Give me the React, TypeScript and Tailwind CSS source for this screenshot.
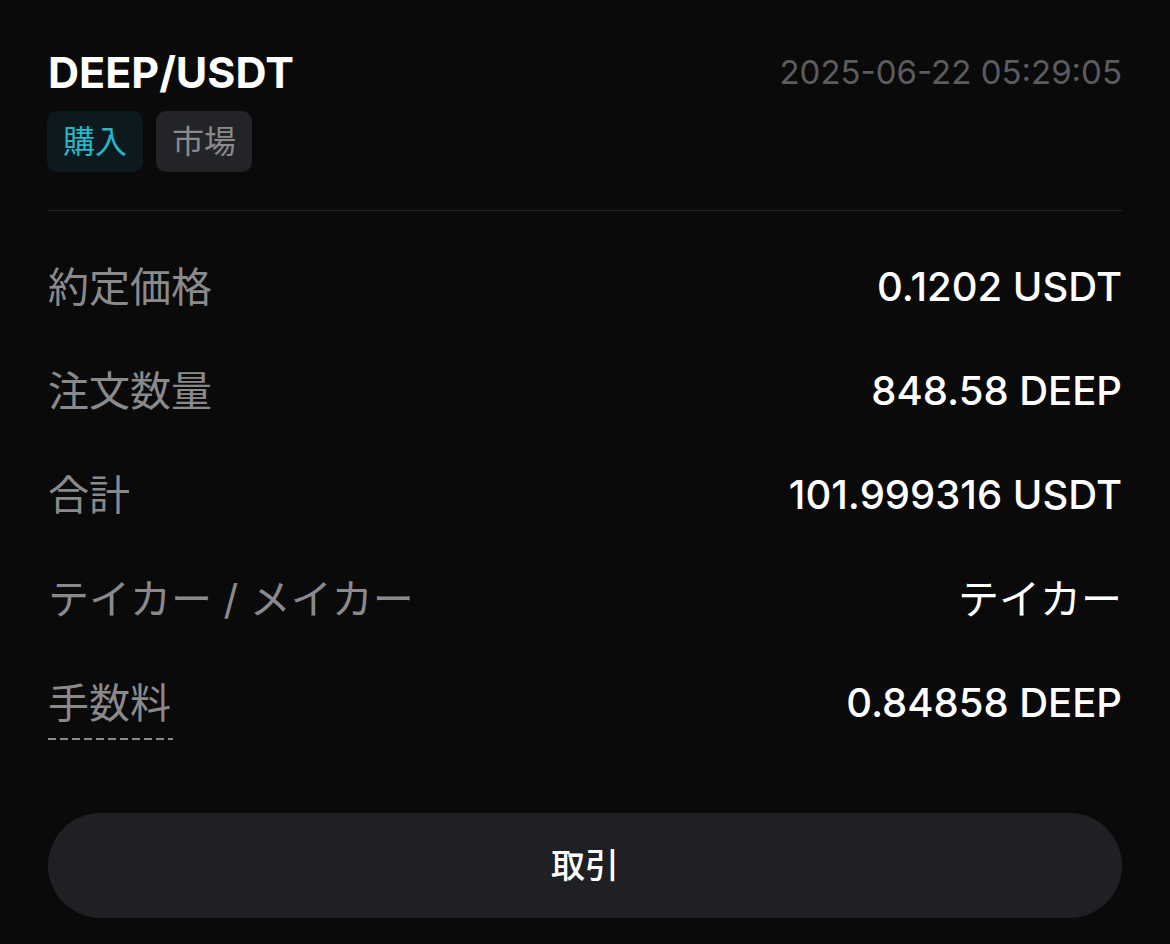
import React from "react";

const ROWS = [
  { label: "約定価格", value: "0.1202 USDT" },
  { label: "注文数量", value: "848.58 DEEP" },
  { label: "合計", value: "101.999316 USDT" },
  { label: "テイカー / メイカー", value: "テイカー", cjk: true },
  { label: "手数料", value: "0.84858 DEEP", dotted: true },
];

const FONT = "font-['Inter','Noto_Sans_CJK_JP',sans-serif]";

export default function App() {
  return (
    <div className={`min-h-[944px] w-full bg-[#0a0a0b] px-12 pt-[46px] ${FONT}`}>
      {/* header */}
      <div className="flex items-start justify-between">
        <div className="flex flex-col">
          <h1 className="text-[43px] font-bold leading-[52px] text-white">DEEP/USDT</h1>
          <div className="-ml-px mt-[13px] flex gap-[13px]">
            <span className="flex h-[61px] items-center rounded-[10px] bg-[#0c1a1d] px-4 text-[32px] text-[#27b5c7]">
              購入
            </span>
            <span className="flex h-[61px] items-center rounded-[10px] bg-[#232427] px-4 text-[32px] text-[#8a8a8d]">
              市場
            </span>
          </div>
        </div>
        <span className="mt-[6px] text-[33px] leading-[40px] text-[#5b5b60]">2025-06-22 05:29:05</span>
      </div>

      <div className="mt-[38px] h-px bg-[#232325]" />

      {/* rows */}
      <div className="mt-6 flex flex-col">
        {ROWS.map((r) => (
          <div key={r.label} className="flex h-[104px] items-center justify-between">
            {r.dotted ? (
              <span className="relative text-[41px] leading-[48px] text-[#8a8a8d]">
                {r.label}
                <span className="absolute -bottom-[13px] left-0 h-[2px] w-[calc(100%+2px)] bg-[repeating-linear-gradient(90deg,#8a8a8d_0_8px,transparent_8px_12px)]" />
              </span>
            ) : (
              <span className="text-[41px] leading-[48px] text-[#8a8a8d]">{r.label}</span>
            )}
            <span
              className={
                r.cjk
                  ? "text-[41px] font-normal leading-[48px] text-white"
                  : "text-[40px] font-medium leading-[48px] text-white"
              }
            >
              {r.value}
            </span>
          </div>
        ))}
      </div>

      <button className="mt-[58px] flex h-[105px] w-full items-center justify-center rounded-full bg-[#1f2023] text-[34px] font-medium text-white">
        取引
      </button>
    </div>
  );
}
